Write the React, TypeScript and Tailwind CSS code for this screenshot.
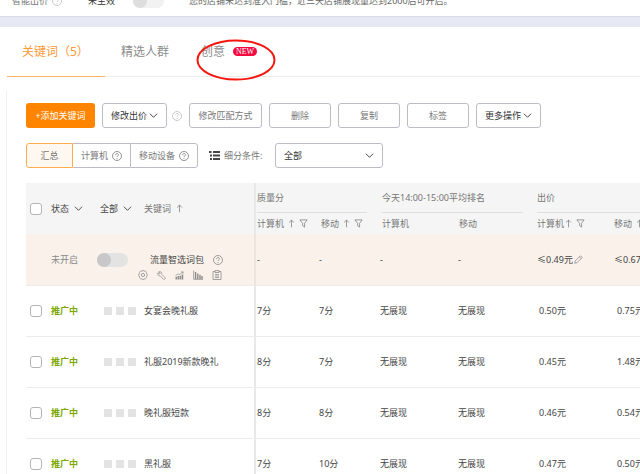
import type { ReactNode } from 'react';

const keywords = [
	{ name: '女宴会晚礼服', pcScore: '7分', mobileScore: '7分', pcBid: '0.50元', mobileBid: '0.75元' },
	{ name: '礼服2019新款晚礼', pcScore: '8分', mobileScore: '7分', pcBid: '0.45元', mobileBid: '1.48元' },
	{ name: '晚礼服短款', pcScore: '8分', mobileScore: '8分', pcBid: '0.46元', mobileBid: '0.54元' },
	{ name: '黑礼服', pcScore: '7分', mobileScore: '10分', pcBid: '0.47元', mobileBid: '0.50元' },
];

function Icon({ children, className = 'size-[9px]' }: { children: ReactNode; className?: string }) {
	return (
		<svg
			className={`shrink-0 ${className}`}
			viewBox="0 0 10 10"
			fill="none"
			stroke="currentColor"
			strokeWidth="0.8"
			aria-hidden="true"
		>
			{children}
		</svg>
	);
}

function Help({ className = 'size-[10px]' }: { className?: string }) {
	return (
		<Icon className={className}>
			<circle cx="5" cy="5" r="4.5" />
			<path d="M3.6 4.1C3.6 2 6.5 2.1 6.5 3.9C6.5 4.9 5 4.9 5 6.1M5 7v.9" />
		</Icon>
	);
}

function Chevron() {
	return (
		<Icon>
			<path d="M1 3l4 4 4-4" strokeWidth="1" />
		</Icon>
	);
}

function Up() {
	return (
		<Icon>
			<path d="M5 9.2V1.2M2.3 3.9L5 1.2l2.7 2.7" />
		</Icon>
	);
}

function Funnel() {
	return (
		<Icon>
			<path d="M1 1h8L6.2 4.8V9L4 7.4V4.8z" />
		</Icon>
	);
}

function Check({ label }: { label: string }) {
	return (
		<input
			type="checkbox"
			aria-label={label}
			className="block size-3 appearance-none rounded-[3px] border border-[#b4b4b4] bg-white checked:bg-[#ff8400]"
		/>
	);
}

function Switch({ label, className }: { label: string; className: string }) {
	return (
		<input
			type="checkbox"
			role="switch"
			aria-label={label}
			className={`block h-[14px] w-[31px] shrink-0 appearance-none rounded-full before:block before:size-[14px] before:rounded-full ${className}`}
		/>
	);
}

function ToolButton({ children, className }: { children: ReactNode; className: string }) {
	return (
		<button className={`flex h-[25px] shrink-0 items-center justify-center rounded-[3px] border border-[#bbbcc8] ${className}`}>
			{children}
		</button>
	);
}

function RowTools() {
	const tool = 'block text-[#8c8c8c]';
	return (
		<div className="flex items-center gap-[9px]">
			<button className={tool} aria-label="设置">
				<Icon className="size-[10px]">
					<path d="M3.8 1L5 .5 6.2 1l1.4.3.9 1.2.2 1.3.7 1.2-.7 1.2-.2 1.3-.9 1.2-1.4.3L5 9.5 3.8 9l-1.4-.3-.9-1.2-.2-1.3L.6 5l.7-1.2.2-1.3.9-1.2z" />
					<circle cx="5" cy="5" r="1.6" />
				</Icon>
			</button>
			<button className={tool} aria-label="工具">
				<Icon>
					<path d="M2 .9l1.5 1.5-1 1L1 1.9C.2 3.6 1.4 5.9 3.6 5.5l3.5 3.6c1.2.8 2.7-.7 1.8-1.9L5.4 3.7C5.8 1.5 3.8.2 2 .9z" />
				</Icon>
			</button>
			<button className={tool} aria-label="趋势">
				<Icon>
					<path d="M1.4 9.5V6.5M3.7 9.5V5.6M6 9.5V5.2M8.3 9.5V3.8" strokeWidth="1.7" />
					<path d="M.6 4.9l3-1.6 1.7.6L9 1M6.7 1H9v2" />
				</Icon>
			</button>
			<button className={tool} aria-label="报表">
				<Icon className="size-[10px]">
					<path d="M.7.5v8.8H10" />
					<path d="M2.6 9V2M4.8 9V3.4M7 9V4.8M9 9V6" strokeWidth="1.4" />
				</Icon>
			</button>
			<button className={tool} aria-label="详情">
				<Icon className="size-[10px]">
					<path d="M3 1.5H1v8h8v-8H7M3 .6h4v1.9H3zM3 4.4h4M3 6h4M3 7.6h4" />
				</Icon>
			</button>
		</div>
	);
}

export default function App() {
	return (
		<div className="h-screen overflow-hidden bg-white font-['Noto_Sans','Noto_Sans_CJK_SC',sans-serif] text-[9px] leading-[14px] text-[#444]">
			<header className="h-[17px] overflow-hidden border-b border-[#d8dbe6]">
				<div className="-mt-[6px] flex items-center whitespace-nowrap">
					<div className="flex w-[88px] items-center gap-1 pl-3 text-[#777]">
						智能出价
						<span className="text-[#bbb]">
							<Help />
						</span>
					</div>
					<span className="w-[45px] text-[#333]">未生效</span>
					<Switch label="智能出价" className="bg-[#f2f2f2] before:bg-[#dedede]" />
					<p className="pl-[25px] text-[#666]">您的店铺未达到准入门槛，近三天店铺展现量达到2000后可开启。</p>
				</div>
			</header>
			<div className="h-[10px] bg-[#e6e9f3]" />

			<nav className="ml-[7px] flex border-b border-[#ececec] text-xs text-[#8c8c8c]">
				<button className="-mb-px h-[50px] border-b border-[#ffb366] pr-4 pl-[15px] text-[#ff9933]">关键词（5）</button>
				<button className="h-[49px] px-4">精选人群</button>
				<button className="relative flex h-[49px] items-center gap-2 px-4">
					创意
					<span className="rounded-full bg-[#f5093f] px-[3px] font-['Liberation_Serif',serif] text-[8px] leading-[9px] text-white">
						NEW
					</span>
					{/* hand-drawn callout around the new tab */}
					<svg className="absolute top-3 left-[11px] h-[42px] w-[80px]" viewBox="0 0 80 42" fill="none" aria-hidden="true">
						<ellipse cx="40" cy="21" rx="38.5" ry="19.5" stroke="#f5170d" strokeWidth="2" />
					</svg>
				</button>
			</nav>

			<main className="mt-[14px] ml-[6px] border-l border-[#f0f0f0] pt-[12px] pl-[19px]">
				<div className="flex items-center gap-[7px] whitespace-nowrap text-[#777]">
					<button className="h-[25px] w-[69px] shrink-0 rounded-[3px] bg-[#ff8400] text-white">+添加关键词</button>
					<ToolButton className="w-[65px] gap-[2px] text-[#333]">
						修改出价
						<Chevron />
					</ToolButton>
					<span className="-ml-[2px] text-[#bbb]">
						<Help />
					</span>
					<ToolButton className="w-[73px]">修改匹配方式</ToolButton>
					<ToolButton className="w-[62px]">删除</ToolButton>
					<ToolButton className="w-[62px]">复制</ToolButton>
					<ToolButton className="w-[62px]">标签</ToolButton>
					<ToolButton className="w-[65px] gap-[2px] text-[#333]">
						更多操作
						<Chevron />
					</ToolButton>
				</div>

				<div className="mt-[15px] flex items-center whitespace-nowrap text-[#777]">
					<div className="flex h-[25px]">
						<button className="w-[47px] rounded-l-[3px] border border-[#ffab52] bg-[#fff8f0]">汇总</button>
						<button className="flex w-[57px] items-center justify-center gap-1 border-y border-[#bbbcc8]">
							计算机
							<Help />
						</button>
						<button className="flex w-[68px] items-center justify-center gap-1 rounded-r-[3px] border border-[#bbbcc8]">
							移动设备
							<Help />
						</button>
					</div>
					<svg className="ml-[11px] h-[9px] w-[11px] text-[#444]" viewBox="0 0 11 9" fill="currentColor" aria-hidden="true">
						<path d="M0 0h2.5v2H0zM4 0h7v2H4zM1 3.5h2v2H1zM4 3.5h7v2H4zM1 7h2v2H1zM4 7h7v2H4z" />
					</svg>
					<label htmlFor="segment" className="w-[55px] pl-1">
						细分条件:
					</label>
					<div className="relative flex items-center text-[#333]">
						<select
							id="segment"
							className="h-[25px] w-[108px] appearance-none rounded-[3px] border border-[#bbbcc8] bg-white px-2"
						>
							<option>全部</option>
						</select>
						<span className="pointer-events-none absolute right-[9px]">
							<Chevron />
						</span>
					</div>
				</div>

				<div className="mt-[15px] overflow-hidden">
					<table className="w-full min-w-[666px] table-fixed border-separate border-spacing-0 text-left whitespace-nowrap">
						<colgroup>
							<col className="w-[25px]" />
							<col className="w-[46px]" />
							<col className="w-[44px]" />
							<col className="w-[113px]" />
							<col className="w-[62px]" />
							<col className="w-[61px]" />
							<col className="w-[78px]" />
							<col className="w-[79px]" />
							<col className="w-[78px]" />
							<col />
						</colgroup>
						<thead className="bg-[#f5f5f5] text-[#777] [&_th]:font-normal">
							<tr className="h-[30px]">
								<th rowSpan={2} className="pl-1">
									<Check label="全选" />
								</th>
								<th rowSpan={2}>
									<button className="flex items-center gap-[5px] text-[#444]">
										状态
										<Chevron />
									</button>
								</th>
								<th rowSpan={2} className="pl-[3px]">
									<button className="flex items-center gap-[5px] text-[#444]">
										全部
										<Chevron />
									</button>
								</th>
								<th rowSpan={2} className="pl-[3px]">
									<button className="flex items-center gap-1">
										关键词
										<Up />
									</button>
								</th>
								<th colSpan={2} className="border-l-2 border-[#e8e8e8] pr-[10px] pl-px">
									<div className="h-[30px] border-b border-[#dedede] pt-2">质量分</div>
								</th>
								<th colSpan={2} className="pr-[11px] pl-[5px]">
									<div className="h-[30px] border-b border-[#dedede] pt-2">今天14:00-15:00平均排名</div>
								</th>
								<th colSpan={2} className="pl-[3px]">
									<div className="h-[30px] border-b border-[#dedede] pt-2">出价</div>
								</th>
							</tr>
							<tr className="h-[21px]">
								<th className="border-l-2 border-[#e8e8e8] pl-px">
									<div className="flex items-center gap-[3px]">
										计算机
										<Up />
										<Funnel />
									</div>
								</th>
								<th className="pl-[5px]">
									<div className="flex items-center gap-[3px]">
										移动
										<Up />
										<Funnel />
									</div>
								</th>
								<th className="pl-[5px]">计算机</th>
								<th className="pl-1">移动</th>
								<th className="pl-[3px]">
									<div className="flex items-center gap-[3px]">
										<span className="flex items-center">
											计算机
											<Up />
										</span>
										<Funnel />
									</div>
								</th>
								<th className="pl-[2px]">
									<div className="flex items-center gap-[3px]">
										移动
										<Up />
										<Funnel />
									</div>
								</th>
							</tr>
						</thead>
						<tbody>
							<tr className="h-[51px] bg-[#faf2ea]">
								<td />
								<td className="text-[#888]">未开启</td>
								<td>
									<Switch label="流量智选词包" className="bg-[#e3e3e3] before:bg-[#c8c8c8]" />
								</td>
								<td>
									<div className="flex items-center justify-between pt-[14px] pr-[31px] pl-[9px]">
										流量智选词包
										<span className="text-[#888]">
											<Help />
										</span>
									</div>
									<div className="-ml-[3px] pt-[3px]">
										<RowTools />
									</div>
								</td>
								<td className="border-l-2 border-[#ece5de] pl-px">-</td>
								<td className="pl-[3px]">-</td>
								<td className="pl-[3px]">-</td>
								<td className="pl-[3px]">-</td>
								<td className="pl-[3px]">
									<button className="flex items-center gap-px">
										≤0.49元
										<Icon className="size-[9px] text-[#888]">
											<path d="M.8 9.2l.7-2.7L7.2.8l2 2-5.7 5.7zM6 2l2 2" />
										</Icon>
									</button>
								</td>
								<td className="pl-[2px]">≤0.67元</td>
							</tr>
							{keywords.map((k) => (
								<tr key={k.name} className="h-[51px] [&>td]:border-t [&>td]:border-t-[#ededed]">
									<td className="pl-1">
										<Check label={k.name} />
									</td>
									<td className="font-bold text-[#7ba800]">推广中</td>
									<td className="pl-[7px]">
										<div className="flex gap-1">
											<span className="size-2 bg-[#e3e3e3]" />
											<span className="size-2 bg-[#e3e3e3]" />
											<span className="size-2 bg-[#e3e3e3]" />
										</div>
									</td>
									<td className="pl-[3px]">{k.name}</td>
									<td className="border-l-2 border-l-[#e8e8e8] pl-px">{k.pcScore}</td>
									<td className="pl-[3px]">{k.mobileScore}</td>
									<td className="pl-[3px]">无展现</td>
									<td className="pl-[3px]">无展现</td>
									<td className="pl-[5px]">{k.pcBid}</td>
									<td className="pl-[5px]">{k.mobileBid}</td>
								</tr>
							))}
						</tbody>
					</table>
				</div>
			</main>
		</div>
	);
}
